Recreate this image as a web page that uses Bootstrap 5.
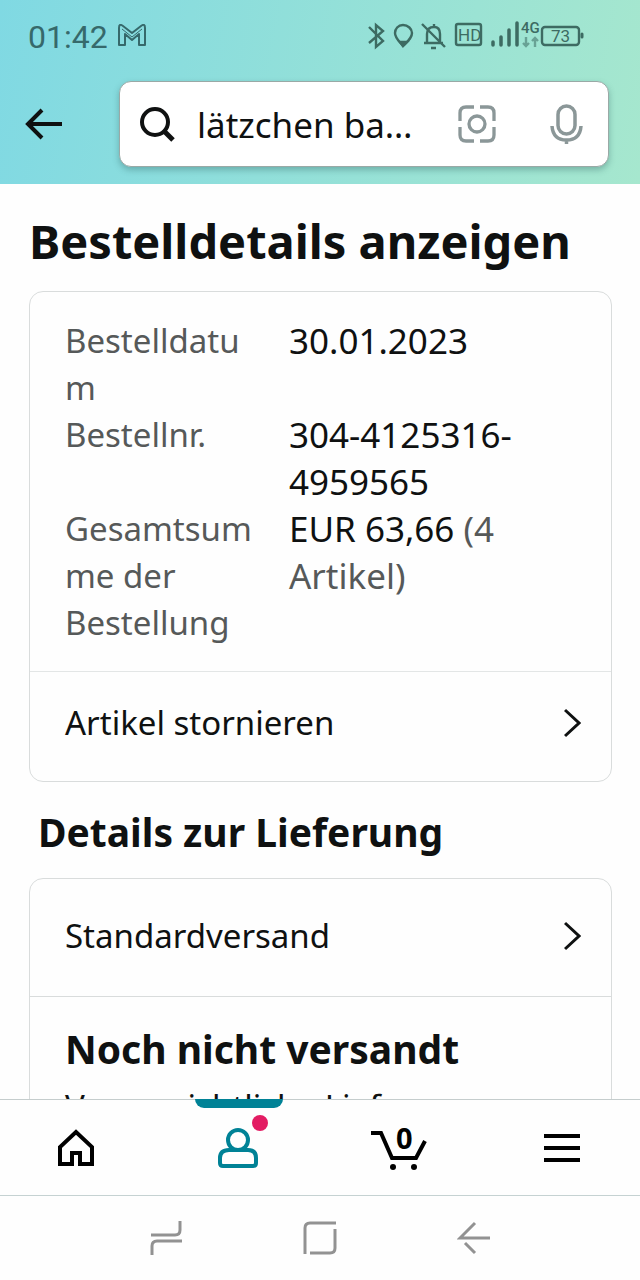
<!DOCTYPE html>
<html lang="de">
<head>
<meta charset="utf-8">
<meta name="viewport" content="width=device-width, initial-scale=1">
<title>Bestelldetails anzeigen</title>
<link href="https://cdn.jsdelivr.net/npm/bootstrap@5.3.0/dist/css/bootstrap.min.css" rel="stylesheet">
<style>
  body { font-family: "Noto Sans", "Open Sans", sans-serif; font-size: 33px; line-height: 47px; color: #0f1111; background: #fefefe; }
  svg { display: block; flex: none; }
  .top-area { background: linear-gradient(100deg, #80d9e3, #a6e7ce); padding-bottom: 17px; }
  .status-bar { height: 72px; padding: 2px 56px 0 28px; color: #36696b; font-family: Roboto, sans-serif; font-size: 32px; }
  .status-icons { color: #3d6b62; }
  .search-row { margin-top: 9px; padding: 0 31px 0 24px; gap: 56px; }
  .search-box { height: 86px; border: 1px solid #9aa9a6; border-radius: 12px; box-shadow: 0 3px 6px rgba(40, 90, 90, .35); padding: 0 24px 0 19px; }
  .search-box input { font-size: 35px; line-height: 47px; color: #0f1111; margin-left: 22px; outline: 0; text-overflow: ellipsis; }
  .voice-button { margin-left: 52px; }
  .page-title { font-size: 47px; line-height: 60px; }
  .section-title { font-size: 39px; line-height: 52px; }
  .delivery-title { margin: 24px 0 20px 9px; }
  .order-page { padding: 27px 28px 0 29px; }
  .order-card { --bs-card-border-color: #d9dcdc; --bs-card-border-radius: 14px; --bs-card-inner-border-radius: 13px; --bs-card-bg: #fefefe; color: #0f1111; }
  .order-facts { padding: 25px 35px; }
  .order-facts dt { width: 224px; padding-right: 32px; word-break: break-word; }
  .order-facts dd { font-size: 35px; }
  .soft { color: #565959; }
  .order-link { padding: 0 30px 8px 35px; min-height: 110px; border-top: 1px solid #e3e6e6; }
  .order-link:first-child { border-top: 0; min-height: 117px; padding-bottom: 4px; }
  .shipment { padding: 26px 35px; border-top: 1px solid #d9dcdc; }
  .tab-bar { height: 97px; border-top: 1px solid #c5cdcd; border-bottom: 1px solid #c5d2d2; padding: 0 32px 0 30px; background: #fefefe; }
  .tab-bar a { width: 92px; color: #000; }
  .tab-bar a.active { color: #008296; }
  .tab-bar a.active::before { content: ""; position: absolute; top: -1px; left: 3px; right: 1px; height: 9px; border-radius: 0 0 9px 9px; background: #008296; }
  .alert-dot { top: 15px; left: 60px; width: 16px; height: 16px; background: #e31c63; }
  .cart-count { top: 15px; left: 42px; font-size: 29px; line-height: 46px; }
  .system-keys { height: 84px; gap: 120px; color: #929292; }
</style>
</head>
<body>
<div class="d-flex flex-column vh-100 overflow-hidden">
  <header class="top-area flex-shrink-0">
    <div class="status-bar d-flex align-items-center justify-content-between">
      <div class="d-flex align-items-center gap-2">
        <span>01:42</span>
        <svg width="32" height="26" viewBox="0 0 32 26" fill="none" stroke="currentColor" stroke-width="2" stroke-linejoin="round"><path d="M3 21V4Q3 -1 7 2L16 9L25 2Q29 -1 29 4V21H23V10L16 16L9 10V21Z"/><path d="M6 5L16 13L26 5" stroke-width="1"/></svg>
      </div>
      <svg class="status-icons" width="218" height="44" viewBox="366 15 218 44" fill="none" stroke="currentColor" stroke-width="2.400">
        <path d="M369 27L383 41L376 47V25L383 31L369 43"/>
        <path d="M403 25C398 25 395 29 395 33C395 38 399 41 403 46C408 41 412 38 412 33C412 29 408 25 403 25Z"/><path d="M400 42H407L403 46Z" fill="currentColor"/>
        <path d="M424 43H443M427 42V34C427 29 430 27 434 27C438 27 440 29 440 34V42M434 27V24M431 48H436M422 24L445 47"/>
        <rect x="456" y="24" width="25" height="21" rx="2"/>
        <path d="M493 45V42M501 45V37M509 45V30M517 45V23" stroke-width="3.500" stroke-linecap="round"/>
        <path d="M526 37V46M523 43L526 46L529 43M535 47V38M532 41L535 38L538 41" opacity=".55"/>
        <rect x="542" y="27" width="37" height="18" rx="3"/><path d="M582 34V37" stroke-width="3" stroke-linecap="round"/>
        <g fill="currentColor" stroke="none" font-family="Roboto, sans-serif"><text x="458" y="41" font-size="17">HD</text><text x="521" y="33" font-size="15" font-weight="500">4G</text><text x="551" y="42" font-size="17">73</text></g>
      </svg>
    </div>
    <div class="search-row d-flex align-items-center">
      <button class="btn p-0 border-0" type="button" aria-label="Zurück">
        <svg width="39" height="32" viewBox="0 0 39 32" fill="none" stroke="#0f1111" stroke-width="4"><path d="M38 16H4M18 2L4 16L18 30"/></svg>
      </button>
      <form class="search-box d-flex align-items-center flex-grow-1 bg-white">
        <svg width="36" height="36" viewBox="0 0 36 36" fill="none" stroke="#0f1111" stroke-width="4"><circle cx="16" cy="16" r="13"/><path d="M25 25L34 34" stroke-width="5"/></svg>
        <input class="border-0 p-0 bg-transparent flex-grow-1 w-25" type="text" aria-label="Suche" value="lätzchen ba…">
        <button class="btn p-0 border-0" type="button" aria-label="Kamerasuche">
          <svg width="38" height="38" viewBox="0 0 38 38" fill="none" stroke="#8b9798" stroke-width="3.300"><path d="M2 16V8Q2 2 8 2H16M22 2H30Q36 2 36 8V16M36 22V30Q36 36 30 36H22M16 36H8Q2 36 2 30V22"/><circle cx="19" cy="19" r="8"/></svg>
        </button>
        <button class="btn voice-button p-0 border-0" type="button" aria-label="Sprachsuche">
          <svg width="36" height="40" viewBox="0 0 36 40" fill="none" stroke="#8b9798" stroke-width="3.500"><rect x="10" y="2" width="17" height="28" rx="8.500"/><path d="M4 22Q5 36 18.500 36Q32 36 33 22M18.500 36V40"/></svg>
        </button>
      </form>
    </div>
  </header>

  <main class="order-page flex-grow-1 overflow-hidden">
    <h1 class="page-title fw-bold mb-3 pb-1">Bestelldetails anzeigen</h1>
    <section class="card order-card">
      <dl class="order-facts mb-0">
        <div class="d-flex"><dt class="fw-normal soft flex-shrink-0">Bestelldatum</dt><dd class="mb-0">30.01.2023</dd></div>
        <div class="d-flex"><dt class="fw-normal soft flex-shrink-0">Bestellnr.</dt><dd class="mb-0">304-4125316-4959565</dd></div>
        <div class="d-flex"><dt class="fw-normal soft flex-shrink-0">Gesamtsumme der Bestellung</dt><dd class="mb-0">EUR 63,66 <span class="soft">(4 Artikel)</span></dd></div>
      </dl>
      <a href="#" class="order-link d-flex align-items-center justify-content-between text-reset text-decoration-none">Artikel stornieren
        <svg width="17" height="30" viewBox="0 0 17 30" fill="none" stroke="currentColor" stroke-width="3"><path d="M1 2L15 15L1 28"/></svg></a>
    </section>

    <h2 class="section-title delivery-title fw-bold">Details zur Lieferung</h2>
    <section class="card order-card">
      <a href="#" class="order-link d-flex align-items-center justify-content-between text-reset text-decoration-none">Standardversand
        <svg width="17" height="30" viewBox="0 0 17 30" fill="none" stroke="currentColor" stroke-width="3"><path d="M1 2L15 15L1 28"/></svg></a>
      <div class="shipment">
        <h3 class="section-title fw-bold mb-2">Noch nicht versandt</h3>
        <p class="mb-0">Voraussichtliche Lieferung</p>
      </div>
    </section>
  </main>

  <nav class="tab-bar d-flex justify-content-between flex-shrink-0 position-relative" aria-label="Hauptmenü">
    <a href="#" class="d-flex align-items-center justify-content-center" aria-label="Startseite">
      <svg width="38" height="38" viewBox="0 0 38 38" fill="none" stroke="currentColor" stroke-width="4"><path d="M3 35V18L19 3L35 18V35H23V24H15V35Z"/></svg></a>
    <a href="#" class="active position-relative d-flex align-items-center justify-content-center" aria-label="Konto">
      <svg width="42" height="42" viewBox="0 0 42 42" fill="none" stroke="currentColor" stroke-width="4"><circle cx="21" cy="13" r="10"/><path d="M12 23H31Q39 23 39 31V36Q39 39 36 39H6Q3 39 3 36V31Q3 23 12 23Z"/></svg>
      <span class="alert-dot position-absolute rounded-circle"></span></a>
    <a href="#" class="position-relative d-flex align-items-center justify-content-center text-decoration-none" aria-label="Einkaufswagen">
      <svg width="58" height="44" viewBox="0 0 58 44" fill="none" stroke="currentColor" stroke-width="4"><path d="M0 7H10L21 32H45L54 15"/><circle cx="22" cy="41" r="3"  fill="currentColor" stroke="none"/><circle cx="43" cy="41" r="3" fill="currentColor" stroke="none"/></svg>
      <span class="cart-count position-absolute fw-bold">0</span></a>
    <a href="#" class="d-flex align-items-center justify-content-center" aria-label="Menü">
      <svg width="36" height="28" viewBox="0 0 36 28" stroke="currentColor" stroke-width="4"><path d="M0 2H36M0 14H36M0 26H36"/></svg></a>
  </nav>
  <div class="system-keys d-flex align-items-center justify-content-center flex-shrink-0">
    <button class="btn p-0 border-0 text-reset" type="button" aria-label="Letzte Apps"><svg width="34" height="36" viewBox="0 0 34 36" fill="none" stroke="currentColor" stroke-width="3"><path d="M2 15H26Q31 15 31 10V1M3 35V26Q3 21 8 21H33"/></svg></button>
    <button class="btn p-0 border-0 text-reset" type="button" aria-label="Startbildschirm"><svg width="34" height="34" viewBox="0 0 34 34" fill="none" stroke="currentColor" stroke-width="3"><path d="M2 33V7Q2 2 7 2H33M32 8V27Q32 32 27 32H7"/></svg></button>
    <button class="btn p-0 border-0 text-reset" type="button" aria-label="Zurück"><svg width="34" height="34" viewBox="0 0 34 34" fill="none" stroke="currentColor" stroke-width="3"><path d="M18 2L3 17H33M8 22L18 32"/></svg></button>
  </div>
</div>
<script src="https://cdn.jsdelivr.net/npm/bootstrap@5.3.0/dist/js/bootstrap.bundle.min.js"></script>
</body>
</html>
